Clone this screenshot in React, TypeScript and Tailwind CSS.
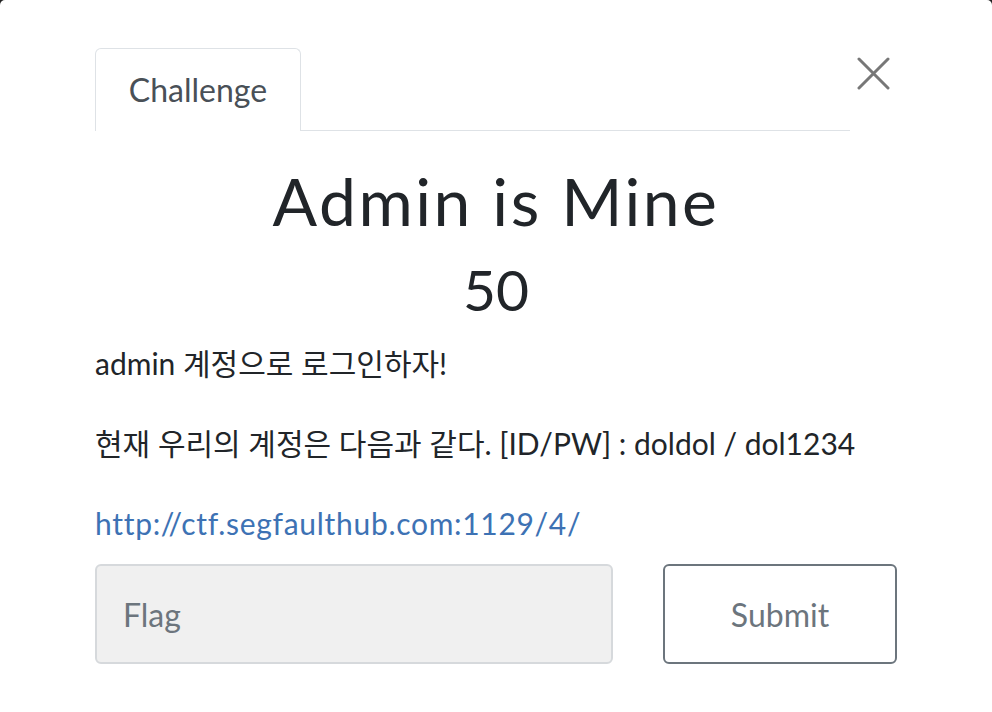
import React from "react";

export default function App() {
  const font = { fontFamily: "Lato, 'Noto Sans CJK KR', sans-serif" };
  return (
    <div className="w-[992px] h-[712px] bg-[#222]" style={font}>
      <div className="w-full h-full bg-white rounded-t-[5px] px-[95px] pt-[48px]">
        <div className="flex items-start">
          <div className="flex-1 flex border-b border-[#dee2e6]">
            <div className="w-[206px] h-[83px] -mb-px bg-white border border-b-0 border-[#dee2e6] rounded-t-[6px] flex items-center justify-center text-[32px] text-[#495057]">
              Challenge
            </div>
          </div>
          <div className="w-[47px] flex justify-end pt-[9px] pr-[7px]">
            <svg width="33" height="33" viewBox="0 0 33 33">
              <path d="M2 2 L31 31 M31 2 L2 31" stroke="#777" strokeWidth="3" strokeLinecap="round" />
            </svg>
          </div>
        </div>
        <h2 className="mt-[30px] text-center text-[66px] leading-[1.2] text-[#212529] tracking-[2.5px]">
          Admin is Mine
        </h2>
        <h3 className="mt-[15px] text-center text-[57px] leading-[1.2] text-[#212529]">50</h3>
        <div className="mt-[17px] text-[30px] leading-[45px] text-[#212529]">
          <p className="mb-[35px]">admin 계정으로 로그인하자!</p>
          <p className="mb-[35px]">현재 우리의 계정은 다음과 같다. [ID/PW] : doldol / dol1234</p>
          <p>
            <a className="text-[#3d72b4] tracking-[0.7px]">http://ctf.segfaulthub.com:1129/4/</a>
          </p>
        </div>
        <div className="mt-[18px] flex gap-[50px]">
          <div className="w-[518px] h-[100px] bg-[#f0f0f0] border-2 border-[#d6d9dc] rounded-[6px] flex items-center pl-[26px] pt-[3px] text-[32px] text-[#6c757d]">
            Flag
          </div>
          <div className="w-[234px] h-[100px] border-2 border-[#6c757d] rounded-[6px] flex items-center justify-center pt-[3px] text-[32px] text-[#6c757d]">
            Submit
          </div>
        </div>
      </div>
    </div>
  );
}
